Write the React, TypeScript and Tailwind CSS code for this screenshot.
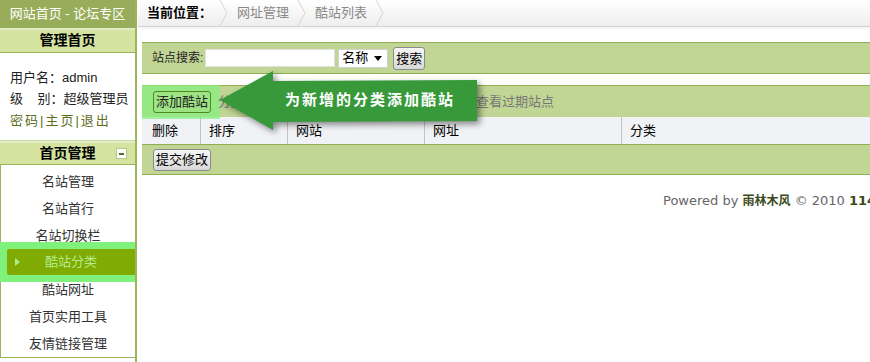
import React from 'react';

const font = { fontFamily: '"Liberation Sans", "Noto Sans CJK SC", sans-serif' };

const menu = ['名站管理', '名站首行', '名站切换栏', '酷站分类', '酷站网址', '首页实用工具', '友情链接管理'];

function Sidebar() {
  return (
    <aside className="w-[137px] shrink-0 flex flex-col border-r-2 border-[#9cb45c] h-[362px]">
      <div className="h-[28px] bg-[#98ad59] text-white text-[13px] flex items-center justify-center">网站首页 - 论坛专区</div>
      <div className="border-t-2 border-[#e4ecc6] h-[25px] bg-[#d4e4a0] border-b border-b-[#9cb45c] flex items-center justify-center text-[14px] font-bold text-black">管理首页</div>
      <div className="h-[88px] bg-white pl-[10px] pt-[14px] text-[13px] text-[#222] leading-[21.5px]">
        <div>用户名：admin</div>
        <div>级&nbsp;&nbsp;&nbsp;&nbsp;别：超级管理员</div>
        <div className="text-[#5c6e1c] tracking-[2px]">密码|主页|退出</div>
      </div>
      <div className="border-t border-[#c8d6a0]" />
      <div className="border-t-2 border-[#e4ecc6] h-[24px] bg-[#d4e4a0] border-b border-b-[#9cb45c] flex items-center justify-center relative text-[14px] font-bold text-black">
        首页管理
        <span className="absolute right-[8px] top-[5px] w-[11px] h-[11px] bg-white border border-[#b8c990] flex items-center justify-center">
          <span className="w-[5px] h-[2px] bg-[#5a6a2a]" />
        </span>
      </div>
      <div className="flex-1 border-l border-[#9cb45c] border-b border-b-[#9cb45c] pt-[3px] mb-[4px]">
        {menu.map((m) =>
          m === '酷站分类' ? (
            <div key={m} className="h-[27px] relative">
              <div className="absolute left-[-1px] right-0 top-[-7px] h-[40px] bg-[#80f27c]" />
              <div className="absolute left-[6px] right-0 top-0 h-[26px] bg-[#7fab02] rounded-l-[2px] flex items-center justify-center text-[13px] text-[#b4ec8c]">
                <span className="absolute left-[8px] top-[9px] w-0 h-0 border-y-[4px] border-y-transparent border-l-[5px] border-l-[#b4ec8c]" />
                酷站分类
              </div>
            </div>
          ) : (
            <div key={m} className="h-[27px] flex items-center justify-center text-[13px] text-[#333]">{m}</div>
          )
        )}
      </div>
    </aside>
  );
}

function Crumb({ children, bold }: { children: React.ReactNode; bold?: boolean }) {
  return (
    <div className="flex items-center h-full">
      <span className={bold ? 'font-bold text-black pl-[9px] pr-[7px]' : 'text-[#888] px-[8px]'}>{children}</span>
      <svg width="10" height="26" viewBox="0 0 10 26" className="shrink-0">
        <polyline points="1,0 8,13 1,26" fill="none" stroke="#d4d4d4" strokeWidth="1" />
      </svg>
    </div>
  );
}

function Btn({ children, className = '' }: { children: React.ReactNode; className?: string }) {
  return (
    <button className={`h-[22px] px-0 whitespace-nowrap text-[13px] text-black border border-[#8a8a8a] rounded-[3px] bg-gradient-to-b from-[#f6f6f6] to-[#d8d8d8] leading-none ${className}`}>{children}</button>
  );
}

export default function App() {
  return (
    <div className="w-[870px] h-[362px] overflow-hidden bg-white flex relative" style={font}>
      <Sidebar />
      <main className="flex-1 min-w-0 flex flex-col">
        <div className="h-[27px] ml-[1px] bg-gradient-to-b from-white to-[#eeeeee] border-b border-[#d4d4d4] flex items-stretch text-[13px] shadow-[0_2px_3px_rgba(0,0,0,0.05)]">
          <Crumb bold>当前位置：</Crumb>
          <Crumb>网址管理</Crumb>
          <Crumb>酷站列表</Crumb>
        </div>

        <div className="ml-[5px] mt-[15px] h-[32px] bg-[#c1d595] border-y border-[#8fae4d] flex items-center pl-[10px] text-[12px] text-[#222]">
          <span>站点搜索:</span>
          <input className="ml-[2px] w-[130px] h-[18px] bg-white border border-[#e0e0e0] outline-none" />
          <div className="ml-[3px] w-[50px] h-[19px] bg-white border border-[#d0d0d0] flex items-center justify-between px-[3px] text-[13px] text-black">
            名称
            <span className="w-0 h-0 border-x-[4px] border-x-transparent border-t-[5px] border-t-black mr-[2px]" />
          </div>
          <Btn className="ml-[5px] w-[32px] h-[23px]">搜索</Btn>
        </div>

        <div className="ml-[5px] mt-[11px] h-[32px] bg-[#c1d595] border-t border-[#8fae4d] flex items-center pl-[11px] text-[13px] text-[#777] relative">
          <div className="absolute left-0 top-[-1px] w-[78px] h-[34px] bg-[#82f07c]/70" />
          <button className="relative h-[22px] w-[58px] px-0 whitespace-nowrap text-[13px] text-[#222] border border-[#4c8a1e] rounded-[3px] bg-[#9ee484] leading-none">添加酷站</button>
          <span className="relative ml-[7px]">分类</span>
          <span className="relative ml-[232px]">查看过期站点</span>
        </div>

        <div className="ml-[5px] h-[27px] bg-[#f1f2f5] flex text-[13px] text-black">
          <div className="w-[59px] pl-[10px] flex items-center border-r border-[#c4c4c4]">删除</div>
          <div className="w-[87px] pl-[8px] flex items-center border-r border-[#c4c4c4]">排序</div>
          <div className="w-[137px] pl-[8px] flex items-center border-r border-[#c4c4c4]">网站</div>
          <div className="w-[197px] pl-[8px] flex items-center border-r border-[#c4c4c4]">网址</div>
          <div className="flex-1 pl-[8px] flex items-center">分类</div>
        </div>

        <div className="ml-[5px] h-[31px] bg-[#c1d595] border-y border-[#8fae4d] flex items-center pl-[11px]">
          <Btn className="w-[58px]">提交修改</Btn>
        </div>

        <div className="mt-[16px] pl-[526px] whitespace-nowrap text-[13px] text-[#666]" style={{ fontFamily: '"DejaVu Sans", "Noto Sans CJK SC", sans-serif' }}>
          Powered by <b className="text-[#3b4a1a] text-[12px]">雨林木风</b> © 2010 <b className="text-[#3b4a1a]">114</b>
        </div>
      </main>

      <svg className="absolute left-[210px] top-[62px] drop-shadow-[3px_3px_3px_rgba(0,0,0,0.45)]" width="290" height="82" viewBox="0 0 290 82">
        <polygon points="10,38 63,9 63,19 267,18 267,59 63,60 63,68" fill="#37993a" />
      </svg>
      <div className="absolute left-[285px] top-[89px] text-white font-bold text-[15px] tracking-[2px] leading-[22px]">为新增的分类添加酷站</div>
    </div>
  );
}
